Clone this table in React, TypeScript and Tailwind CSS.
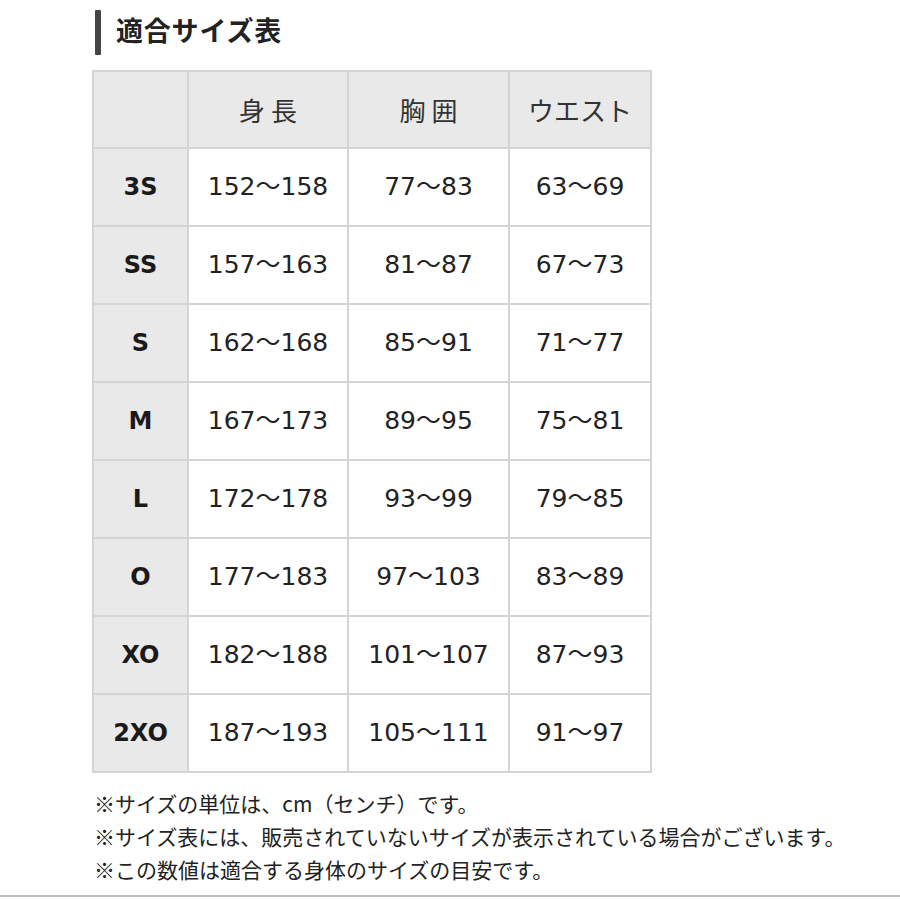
import React from 'react'

const rows: [string, string, string, string][] = [
    ['3S', '152～158', '77～83', '63～69'],
    ['SS', '157～163', '81～87', '67～73'],
    ['S', '162～168', '85～91', '71～77'],
    ['M', '167～173', '89～95', '75～81'],
    ['L', '172～178', '93～99', '79～85'],
    ['O', '177～183', '97～103', '83～89'],
    ['XO', '182～188', '101～107', '87～93'],
    ['2XO', '187～193', '105～111', '91～97'],
]

const notes = [
    '※サイズの単位は、cm（センチ）です。',
    '※サイズ表には、販売されていないサイズが表示されている場合がございます。',
    '※この数値は適合する身体のサイズの目安です。',
]

export default function App() {
    return (
        <div className="w-[900px] h-[900px] bg-white overflow-hidden font-['Noto_Sans_CJK_JP',sans-serif] text-[#222]">
            <div className="pl-[92px] pt-[10px]">
                {/* Title */}
                <div className="flex items-start gap-[15px] pl-[3px]">
                    <div className="w-[6px] h-[45px] bg-[#444] rounded-[1px]" />
                    <h1 className="text-[27px] leading-[40px] font-bold text-[#222] tracking-[0.8px]">適合サイズ表</h1>
                </div>

                {/* Table */}
                <table className="mt-[15px] border-collapse border-2 border-[#d4d4d4]">
                    <thead>
                        <tr className="h-[77px] bg-[#e9e9e9]">
                            <th className="w-[95px] border-2 border-[#d4d4d4]" />
                            <th className="w-[160px] border-2 border-[#d4d4d4] text-[26px] font-normal text-[#333]">身 長</th>
                            <th className="w-[161px] border-2 border-[#d4d4d4] text-[26px] font-normal text-[#333]">胸 囲</th>
                            <th className="w-[142px] border-2 border-[#d4d4d4] text-[26px] font-normal text-[#333]">ウエスト</th>
                        </tr>
                    </thead>
                    <tbody>
                        {rows.map(([size, height, chest, waist]) => (
                            <tr key={size} className="h-[78px]">
                                <td className="bg-[#e9e9e9] border-2 border-[#d4d4d4] text-center text-[24px] font-bold font-['DejaVu_Sans','Noto_Sans_CJK_JP',sans-serif] text-[#1a1a1a]">
                                    {size}
                                </td>
                                {[height, chest, waist].map((v, i) => (
                                    <td
                                        key={i}
                                        className="border-2 border-[#d4d4d4] text-center text-[25px] font-['DejaVu_Sans','Noto_Sans_CJK_JP',sans-serif] text-[#222]"
                                    >
                                        {v}
                                    </td>
                                ))}
                            </tr>
                        ))}
                    </tbody>
                </table>

                {/* Notes */}
                <div className="mt-[14px] pl-[2px] text-[21px] leading-[33px] text-[#222]">
                    {notes.map((n) => (
                        <p key={n}>{n}</p>
                    ))}
                </div>
            </div>
            <div className="mt-[9px] h-[2px] bg-[#bdbdbd]" />
        </div>
    )
}
